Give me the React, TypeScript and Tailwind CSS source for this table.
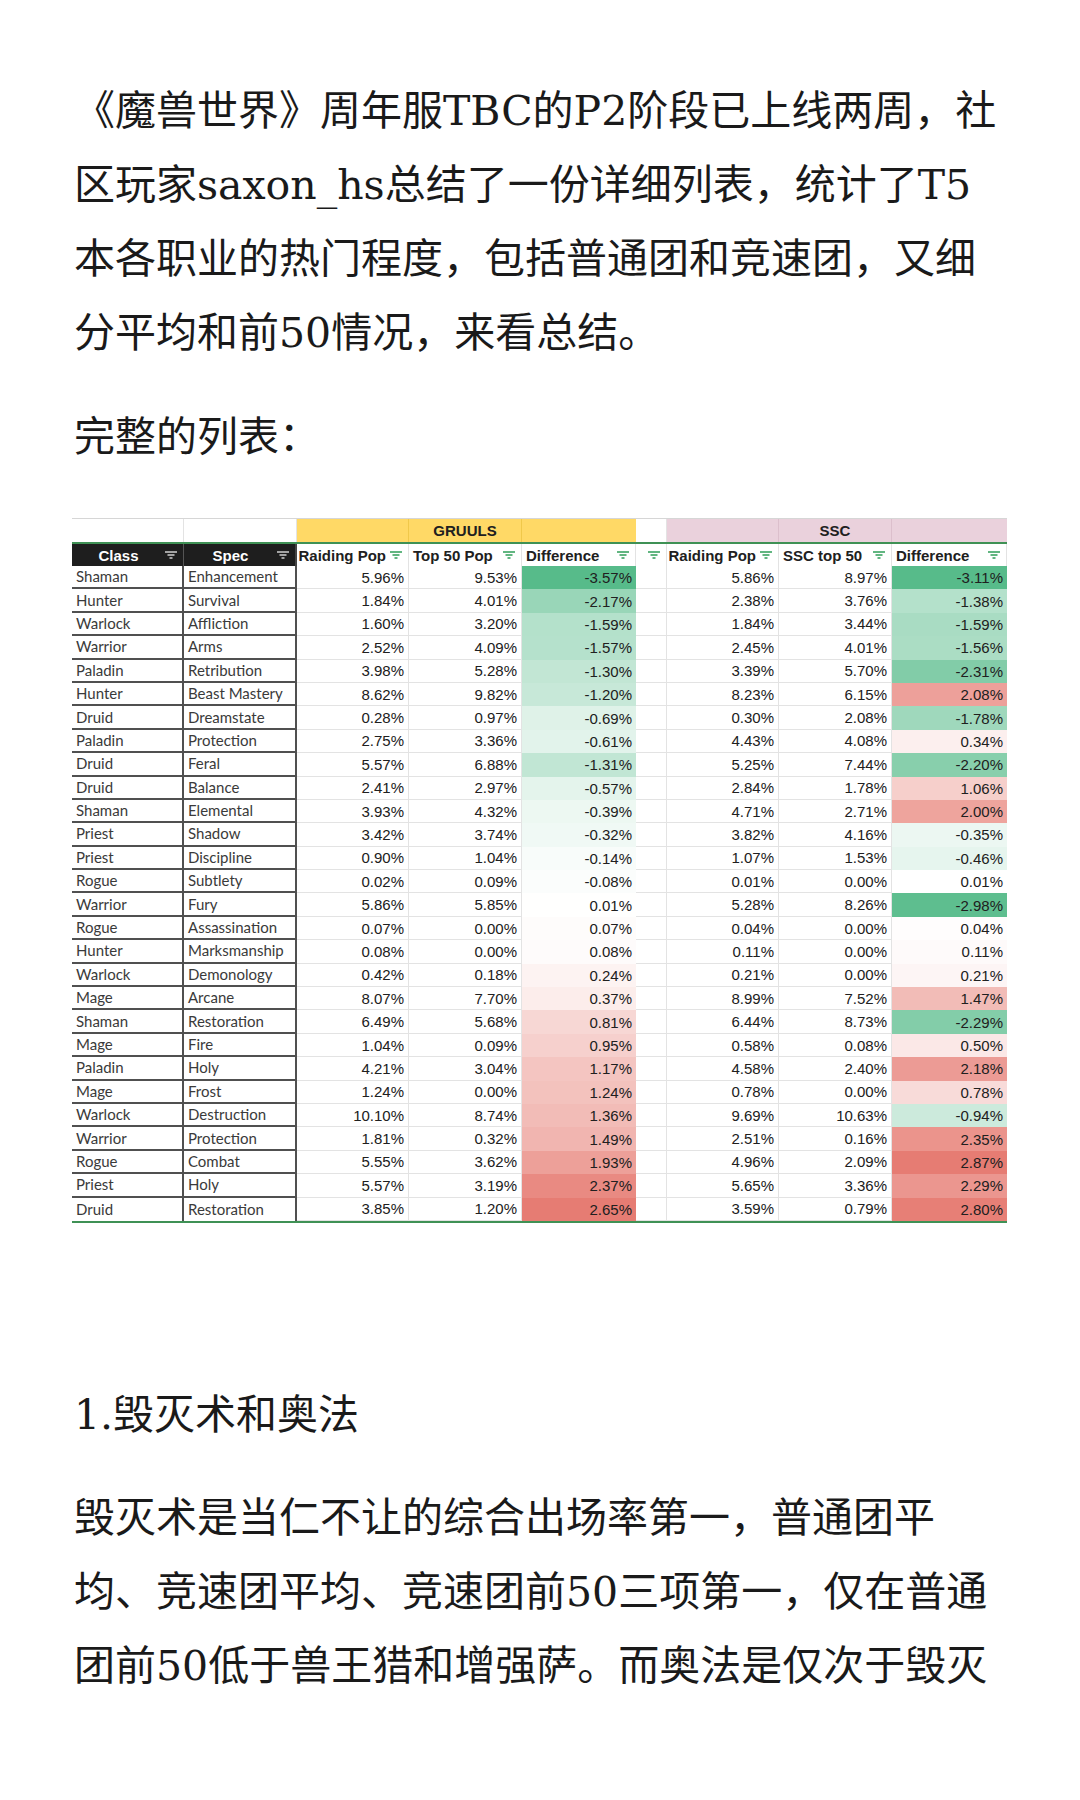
import React from 'react';

type Row = [string, string, number, number, number, number, number, number];

const rows: Row[] = [
  ['Shaman', 'Enhancement', 5.96, 9.53, -3.57, 5.86, 8.97, -3.11],
  ['Hunter', 'Survival', 1.84, 4.01, -2.17, 2.38, 3.76, -1.38],
  ['Warlock', 'Affliction', 1.6, 3.2, -1.59, 1.84, 3.44, -1.59],
  ['Warrior', 'Arms', 2.52, 4.09, -1.57, 2.45, 4.01, -1.56],
  ['Paladin', 'Retribution', 3.98, 5.28, -1.3, 3.39, 5.7, -2.31],
  ['Hunter', 'Beast Mastery', 8.62, 9.82, -1.2, 8.23, 6.15, 2.08],
  ['Druid', 'Dreamstate', 0.28, 0.97, -0.69, 0.3, 2.08, -1.78],
  ['Paladin', 'Protection', 2.75, 3.36, -0.61, 4.43, 4.08, 0.34],
  ['Druid', 'Feral', 5.57, 6.88, -1.31, 5.25, 7.44, -2.2],
  ['Druid', 'Balance', 2.41, 2.97, -0.57, 2.84, 1.78, 1.06],
  ['Shaman', 'Elemental', 3.93, 4.32, -0.39, 4.71, 2.71, 2.0],
  ['Priest', 'Shadow', 3.42, 3.74, -0.32, 3.82, 4.16, -0.35],
  ['Priest', 'Discipline', 0.9, 1.04, -0.14, 1.07, 1.53, -0.46],
  ['Rogue', 'Subtlety', 0.02, 0.09, -0.08, 0.01, 0.0, 0.01],
  ['Warrior', 'Fury', 5.86, 5.85, 0.01, 5.28, 8.26, -2.98],
  ['Rogue', 'Assassination', 0.07, 0.0, 0.07, 0.04, 0.0, 0.04],
  ['Hunter', 'Marksmanship', 0.08, 0.0, 0.08, 0.11, 0.0, 0.11],
  ['Warlock', 'Demonology', 0.42, 0.18, 0.24, 0.21, 0.0, 0.21],
  ['Mage', 'Arcane', 8.07, 7.7, 0.37, 8.99, 7.52, 1.47],
  ['Shaman', 'Restoration', 6.49, 5.68, 0.81, 6.44, 8.73, -2.29],
  ['Mage', 'Fire', 1.04, 0.09, 0.95, 0.58, 0.08, 0.5],
  ['Paladin', 'Holy', 4.21, 3.04, 1.17, 4.58, 2.4, 2.18],
  ['Mage', 'Frost', 1.24, 0.0, 1.24, 0.78, 0.0, 0.78],
  ['Warlock', 'Destruction', 10.1, 8.74, 1.36, 9.69, 10.63, -0.94],
  ['Warrior', 'Protection', 1.81, 0.32, 1.49, 2.51, 0.16, 2.35],
  ['Rogue', 'Combat', 5.55, 3.62, 1.93, 4.96, 2.09, 2.87],
  ['Priest', 'Holy', 5.57, 3.19, 2.37, 5.65, 3.36, 2.29],
  ['Druid', 'Restoration', 3.85, 1.2, 2.65, 3.59, 0.79, 2.8],
];

const intro = [
  '《魔兽世界》周年服TBC的P2阶段已上线两周，社',
  '区玩家saxon_hs总结了一份详细列表，统计了T5',
  '本各职业的热门程度，包括普通团和竞速团，又细',
  '分平均和前50情况，来看总结。',
];

const section = [
  '毁灭术是当仁不让的综合出场率第一，普通团平',
  '均、竞速团平均、竞速团前50三项第一，仅在普通',
  '团前50低于兽王猎和增强萨。而奥法是仅次于毁灭',
];

const cols = 'grid grid-cols-[112px_113px_112px_113px_114px_31px_112px_113px_115px]';

// google sheets style green-white-red scale, midpoint at 0
const scaleColor = (v: number, min: number, max: number) => {
  const end = v < 0 ? [87, 187, 138] : [230, 124, 115];
  const t = v < 0 ? Math.min(v / min, 1) : Math.min(v / max, 1);
  const c = end.map((e) => Math.round(255 + (e - 255) * t));
  return `rgb(${c[0]}, ${c[1]}, ${c[2]})`;
};

const pct = (n: number) => `${n.toFixed(2)}%`;

const FilterIcon: React.FC<{ color: string }> = ({ color }) => (
  <svg width="12" height="8" viewBox="0 0 12 8" className="shrink-0">
    <path d="M0 1h12M2.5 4h7M4.5 7h3" stroke={color} strokeWidth="1.3" />
  </svg>
);

const HeadCell: React.FC<{ label?: string }> = ({ label }) => (
  <div className="flex items-center justify-end gap-1 overflow-hidden border-r border-[#e3e3e3] pl-[4px] pr-[6px]">
    {label && <span className="mr-auto whitespace-nowrap">{label}</span>}
    <FilterIcon color="#2f9e58" />
  </div>
);

const NumCell: React.FC<{ v: number }> = ({ v }) => (
  <div className="flex items-center justify-end border-b border-r border-[#e3e3e3] pr-[4px]">{pct(v)}</div>
);

const DiffCell: React.FC<{ v: number; min: number; max: number }> = ({ v, min, max }) => (
  <div className="flex items-center justify-end pr-[4px]" style={{ backgroundColor: scaleColor(v, min, max) }}>
    {pct(v)}
  </div>
);

const Sheet: React.FC = () => (
  <div className="-ml-[2px] mt-[44px] w-[935px] font-['Liberation_Sans',Arial,sans-serif] text-[15px] leading-none text-[#202020]">
    <div className={`${cols} h-[24px] grid-rows-[100%] border-t border-[#d6d6d6] font-bold`}>
      <div className="border-r border-[#e3e3e3]" />
      <div className="border-r border-[#e3e3e3]" />
      <div className="border-r border-[#f0c84a] bg-[#ffd966]" />
      <div className="flex items-center justify-center border-r border-[#f0c84a] bg-[#ffd966]">GRUULS</div>
      <div className="bg-[#ffd966]" />
      <div className="border-r border-[#e3e3e3]" />
      <div className="border-r border-[#dcbfcc] bg-[#ead1dc]" />
      <div className="flex items-center justify-center border-r border-[#dcbfcc] bg-[#ead1dc]">SSC</div>
      <div className="bg-[#ead1dc]" />
    </div>

    <div className={`${cols} h-[24px] grid-rows-[100%] border-t-2 border-[#3f9155] font-bold`}>
      <div className="flex items-center border-r border-[#555] bg-[#1e1e1e] pr-[6px] text-white">
        <span className="flex-1 text-center">Class</span>
        <FilterIcon color="#d0d0d0" />
      </div>
      <div className="flex items-center border-r-2 border-[#444] bg-[#1e1e1e] pr-[6px] text-white">
        <span className="flex-1 text-center">Spec</span>
        <FilterIcon color="#d0d0d0" />
      </div>
      <HeadCell label="Raiding Pop" />
      <HeadCell label="Top 50 Pop" />
      <HeadCell label="Difference" />
      <HeadCell />
      <HeadCell label="Raiding Pop" />
      <HeadCell label="SSC top 50" />
      <HeadCell label="Difference" />
    </div>

    <div className="border-b-2 border-[#3f9155]">
      {rows.map((r, i) => (
        <div key={i} className={`${cols} h-[23.4px] grid-rows-[100%]`}>
          <div
            className={`flex items-center border-r-2 border-[#505050] pl-[4px] font-['Lato',sans-serif] text-[#3a3a3a] ${
              i < rows.length - 1 ? 'border-b-2' : ''
            }`}
          >
            {r[0]}
          </div>
          <div
            className={`flex items-center border-r-2 border-[#505050] pl-[4px] font-['Lato',sans-serif] text-[#3a3a3a] ${
              i < rows.length - 1 ? 'border-b-2' : ''
            }`}
          >
            {r[1]}
          </div>
          <NumCell v={r[2]} />
          <NumCell v={r[3]} />
          <DiffCell v={r[4]} min={-3.57} max={2.65} />
          <div className="border-b border-r border-[#e3e3e3]" />
          <NumCell v={r[5]} />
          <NumCell v={r[6]} />
          <DiffCell v={r[7]} min={-3.11} max={2.87} />
        </div>
      ))}
    </div>
  </div>
);

const Lines: React.FC<{ lines: string[]; className?: string }> = ({ lines, className = '' }) => (
  <p className={className}>
    {lines.map((l, i) => (
      <span key={i} className="block whitespace-nowrap">
        {l}
      </span>
    ))}
  </p>
);

export default function App() {
  return (
    <div className="min-h-[1800px] bg-white">
      <article className="px-[74px] pt-[74px] font-['DejaVu_Serif','Noto_Sans_CJK_SC',serif] text-[41px] leading-[74px] text-[#1a1a1a]">
        <Lines lines={intro} />
        <p className="mt-[30px]">完整的列表：</p>

        <Sheet />

        <h2 className="mt-[155px]">1.毁灭术和奥法</h2>
        <Lines lines={section} className="mt-[29px]" />
      </article>
    </div>
  );
}
